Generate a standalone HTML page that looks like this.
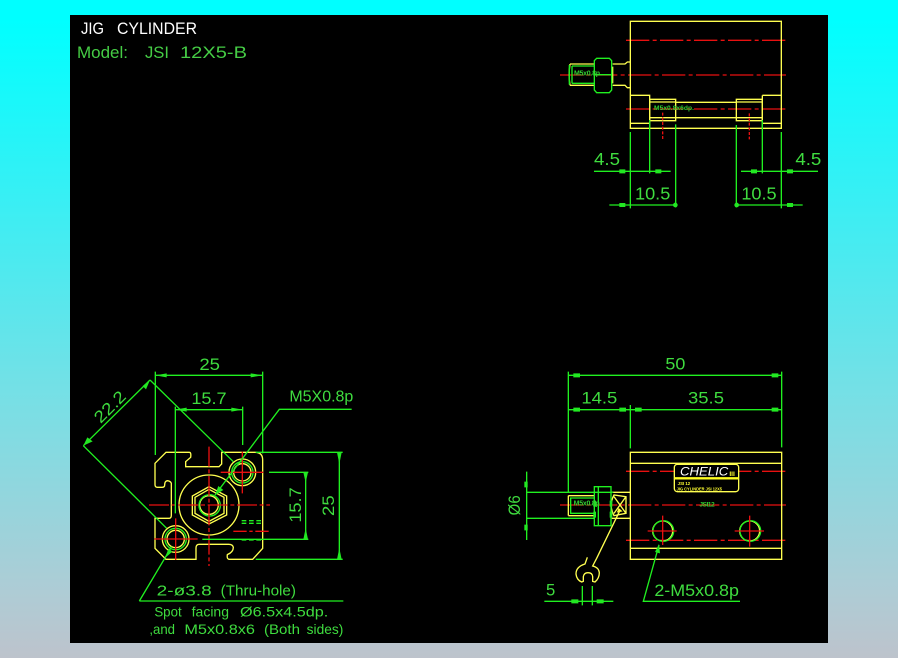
<!DOCTYPE html>
<html><head><meta charset="utf-8"><style>
html,body{margin:0;padding:0;width:898px;height:658px;overflow:hidden;background:linear-gradient(180deg,#00ffff 0%,#00ffff 3%,#38eff4 30%,#78dfe5 61%,#aeccd5 90%,#bdc3cc 100%)}
svg{position:absolute;left:0;top:0}
text{font-family:"Liberation Sans",sans-serif}
.y{stroke:#ffff50;fill:none;stroke-width:4}
.g{stroke:#20f020;fill:none;stroke-width:4}
.r{stroke:#e81010;fill:none;stroke-width:4;stroke-dasharray:70 10 12 10}
.rs{stroke:#e81010;fill:none;stroke-width:4}
.a{fill:#22e822;stroke:none}
.t{fill:#3fdc3f}
</style></head><body>
<svg width="898" height="658" viewBox="0 0 898 658">
<rect x="70" y="15" width="758" height="628" fill="#000"/>
<g font-size="17" fill="#fff">
<text x="81" y="34" textLength="23" lengthAdjust="spacingAndGlyphs">JIG</text>
<text x="117" y="34" textLength="80" lengthAdjust="spacingAndGlyphs">CYLINDER</text>
</g>
<g font-size="17" fill="#45cc45">
<text x="77" y="58" textLength="51" lengthAdjust="spacingAndGlyphs">Model:</text>
<text x="145" y="58" textLength="24" lengthAdjust="spacingAndGlyphs">JSI</text>
<text x="180" y="58" textLength="67" lengthAdjust="spacingAndGlyphs">12X5-B</text>
</g>

<!-- top view -->
<g transform="translate(550,10) scale(.33333)">
<path class="r" d="M228 91H708M30 195H708M228 297H708"/>
<path class="y" d="M241 34H694V355H241ZM241 256H299V355M241 340H299M637 256H694M637 256V355M637 340H694"/>
<path class="y" d="M299 268H377V332H299ZM299 276H377M299 323H377M377 277H559M377 323H559M559 268H637V332H559ZM559 276H637M559 323H637"/>
<path class="y" d="M188 162H225L232 156H241M188 226H225L232 233H241M188 170V220"/>
<path class="y" d="M60 162H133M60 226H133M60 162Q55 194 60 226"/>
<path class="g" d="M66 168H133M66 220H133M66 168V220M58 165V224"/>
<path class="g" d="M140 145H178L185 152V240L178 248H140L133 240V152ZM133 194H185"/>
<path class="rs" stroke-dasharray="9 5" d="M338 308V388M598 310V388"/>
<path class="g" d="M241 366V595M299 330V490M377 343V592M559 345V592M637 330V490M694 366V595"/>
<path class="g" d="M132 484H362M573 484H804M178 585H377M560 585H758"/>
<path class="a" d="M208 478H226V490H208ZM316 478H334V490H316ZM603 478H621V490H603ZM711 478H729V490H711ZM208 579H226V591H208ZM711 579H729V591H711Z"/>
<circle class="a" cx="376" cy="585" r="7"/><circle class="a" cx="560" cy="585" r="7"/>
<text x="72" y="196" font-size="21" font-weight="bold" fill="#30d030" textLength="78">M5x0.8p</text>
<text x="312" y="300" font-size="20" font-weight="bold" fill="#30d030" textLength="120">M5x0.8x6dp.</text>
<g class="t" font-size="52">
<text x="132" y="465" textLength="78" lengthAdjust="spacingAndGlyphs">4.5</text>
<text x="736" y="465" textLength="78" lengthAdjust="spacingAndGlyphs">4.5</text>
<text x="255" y="568" textLength="106" lengthAdjust="spacingAndGlyphs">10.5</text>
<text x="574" y="568" textLength="106" lengthAdjust="spacingAndGlyphs">10.5</text>
</g>
</g>

<!-- left end view -->
<g transform="translate(70,350) scale(.33333)">
<path class="y" d="M255 340L288 307H358Q364 307 362 322L347 335V350H447L455 342V307H555Q578 307 578 330V595L548 628H478Q470 628 472 614Q490 606 490 592Q488 583 476 583H388Q378 583 378 594V628H288L255 595V505H296Q304 505 304 496V400Q302 393 292 392Q284 393 284 405Q284 412 276 412H262Q255 412 255 404Z"/>
<circle class="y" cx="417" cy="465" r="90"/>
<path class="y" d="M417 410L470 438V495L417 522L367 495V438ZM417 418L462 442V490L417 514L375 490V442Z"/>
<circle class="y" cx="417" cy="465" r="28"/><circle class="g" cx="419" cy="466" r="32"/>
<circle class="y" cx="517" cy="367" r="40"/><circle class="g" cx="517" cy="367" r="32"/><circle class="y" cx="517" cy="367" r="26"/>
<circle class="y" cx="317" cy="567" r="40"/><circle class="g" cx="317" cy="567" r="32"/><circle class="y" cx="317" cy="567" r="26"/>
<path class="rs" stroke-dasharray="60 8 12 8" d="M237 465H600M417 290V648"/>
<path class="rs" d="M517 305V430M452 367H580M317 505V630M253 567H383"/>
<path class="rs" stroke-dasharray="40 8 10 8" d="M490 544H597"/>
<path class="g" stroke-dasharray="14 8" d="M515 512H578M515 520H578M515 570H578"/>
<path class="g" d="M397 568H715M597 367H715M557 307H818M557 628H818"/>
<path class="g" d="M707 367V568M808 307V628"/>
<path class="a" d="M700 367H714L707 398ZM700 568H714L707 534ZM801 307H815L808 342ZM801 628H815L808 594Z"/>
<path class="g" d="M256 65V315M578 65V310M256 76H578M316 170V490M518 170V285M316 179H518"/>
<path class="a" d="M256 76L290 70V82ZM578 76L542 70V82ZM316 179L350 173V185ZM518 179L484 173V185Z"/>
<path class="g" d="M240 90L490 335M40 287L290 535M40 287L240 90"/>
<path class="a" d="M240 90L228 118L218 108ZM40 287L52 262L68 274Z"/>
<path class="g" d="M845 178H628L435 435M208 753H820M208 753L305 590"/>
<path class="a" d="M435 435L445 408L460 420ZM284 625L296 595L307 605Z"/>
<g class="t" font-size="50">
<text x="388" y="60" textLength="62" lengthAdjust="spacingAndGlyphs">25</text>
<text x="364" y="162" textLength="106" lengthAdjust="spacingAndGlyphs">15.7</text>
<text x="658" y="154" font-size="46" textLength="192" lengthAdjust="spacingAndGlyphs">M5X0.8p</text>
<text transform="translate(693,518) rotate(-90)" textLength="106" lengthAdjust="spacingAndGlyphs">15.7</text>
<text transform="translate(792,498) rotate(-90)" textLength="62" lengthAdjust="spacingAndGlyphs">25</text>
<text transform="translate(92,222) rotate(-45)" textLength="112" lengthAdjust="spacingAndGlyphs">22.2</text>
</g>
<g class="t" font-size="44">
<text x="260" y="737" textLength="165" lengthAdjust="spacingAndGlyphs">2-ø3.8</text>
<text x="452" y="737" textLength="226" lengthAdjust="spacingAndGlyphs">(Thru-hole)</text>
</g>
<g class="t" font-size="42">
<text x="253" y="800" textLength="82" lengthAdjust="spacingAndGlyphs">Spot</text>
<text x="365" y="800" textLength="112" lengthAdjust="spacingAndGlyphs">facing</text>
<text x="510" y="800" textLength="265" lengthAdjust="spacingAndGlyphs">Ø6.5x4.5dp.</text>
<text x="238" y="852" textLength="77" lengthAdjust="spacingAndGlyphs">,and</text>
<text x="343" y="852" textLength="212" lengthAdjust="spacingAndGlyphs">M5x0.8x6</text>
<text x="582" y="852" textLength="108" lengthAdjust="spacingAndGlyphs">(Both</text>
<text x="710" y="852" textLength="110" lengthAdjust="spacingAndGlyphs">sides)</text>
</g>
</g>

<!-- side view -->
<g transform="translate(500,350) scale(.33333)">
<path class="r" d="M378 364H858M180 465H858M378 571H858"/>
<path class="y" d="M391 307H845V628H391ZM391 340H845M391 595H845"/>
<rect x="523" y="343" width="193" height="82" rx="9" fill="#000" stroke="#ffff50" stroke-width="4"/>
<path d="M523 385H716" stroke="#ffff20" stroke-width="7"/>
<text x="540" y="376" font-size="36" font-style="italic" fill="#fff" textLength="145" lengthAdjust="spacingAndGlyphs">CHELIC</text>
<text x="688" y="378" font-size="20" font-weight="bold" fill="#ffff30">III</text>
<text x="533" y="405" font-size="13" font-weight="bold" fill="#ffff30">JSI 12</text>
<text x="530" y="422" font-size="14" font-weight="bold" fill="#ffff30" textLength="136" lengthAdjust="spacingAndGlyphs">JIG CYLINDER JSI 12X5</text>
<text x="598" y="469" font-size="20" font-weight="bold" fill="#30d030" textLength="46">JSI12</text>
<circle class="y" cx="488" cy="543" r="30"/><circle class="g" cx="490" cy="543" r="31"/>
<circle class="y" cx="749" cy="543" r="30"/><circle class="g" cx="751" cy="543" r="31"/>
<path class="rs" d="M443 543H530M488 497V585M704 543H792M749 497V590"/>
<path class="y" d="M335 427H391M335 505H391M342 435Q325 466 342 497L378 490V440ZM342 440L378 490M378 440L342 490"/>
<path class="y" d="M205 437H283M205 497H283M205 437V497"/>
<path class="g" d="M212 444H283V490H212ZM283 410H333V527H283ZM295 410V527"/>
<path class="g" d="M80 365V570M78 427H340M78 505H283"/>
<path class="a" d="M73 395H83V412H73ZM73 524H83V541H73ZM280 452H288V470H280ZM329 452H337V470H329ZM280 485H288V503H280ZM329 485H337V503H329Z"/>
<text x="221" y="466" font-size="21" font-weight="bold" fill="#30d030" textLength="78">M5x0.8p</text>
<path d="M350 488L368 484L356 474Z" fill="#ffff30"/>
<path class="y" d="M262 622L255 642Q228 650 228 672Q230 690 245 696L250 694V680Q252 668 264 668Q277 668 278 680V694L285 696Q298 685 298 668Q296 652 278 648L290 625L358 485"/>
<path class="g" d="M205 65V427M845 65V292M205 76H845M205 179H845M391 165V295"/>
<path class="a" d="M220 70H240V82H220ZM815 70H835V82H815ZM220 173H240V185H220ZM358 173H378V185H358ZM405 173H425V185H405ZM815 173H835V185H815Z"/>
<path class="g" d="M133 754H340M247 708V766M277 708V766"/>
<path class="a" d="M214 748H235V760H214ZM290 748H311V760H290Z"/>
<path class="g" d="M720 754H430L477 585"/>
<path class="a" d="M477 582L480 610L465 606Z"/>
<g class="t" font-size="50">
<text x="496" y="59" textLength="60" lengthAdjust="spacingAndGlyphs">50</text>
<text x="244" y="161" textLength="108" lengthAdjust="spacingAndGlyphs">14.5</text>
<text x="564" y="161" textLength="108" lengthAdjust="spacingAndGlyphs">35.5</text>
<text transform="translate(60,496) rotate(-90)" textLength="60" lengthAdjust="spacingAndGlyphs">Ø6</text>
<text x="138" y="736">5</text>
<text x="463" y="738" textLength="254" lengthAdjust="spacingAndGlyphs">2-M5x0.8p</text>
</g>
</g>
</svg>
</body></html>
